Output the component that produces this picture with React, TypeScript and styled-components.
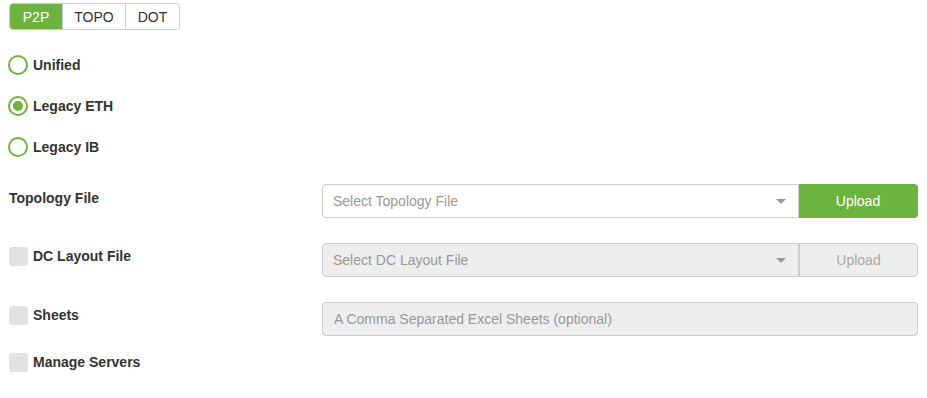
import * as React from 'react';
import styled, { createGlobalStyle } from 'styled-components';

const GREEN = '#6db33f';

const GlobalStyle = createGlobalStyle`
  body {
    margin: 0;
    background: #fff;
    font-family: "Liberation Sans", Arial, Helvetica, sans-serif;
    color: #333;
  }
`

const Page = styled.div`
  padding: 3px 9px 0 8px;
  display: flex;
  flex-direction: column;
`

const TabGroup = styled.div`
  display: inline-flex;
  align-self: flex-start;
  margin-left: 1px;
  height: 27px;
  border: 1px solid #ccc;
  border-radius: 4px;
  overflow: hidden;
  box-sizing: border-box;
`

const Tab = styled.button<{ active?: boolean; w: number }>`
  width: ${p => p.w}px;
  border: none;
  border-left: ${p => (p.active ? 'none' : '1px solid #ccc')};
  &:first-child { border-left: none; }
  background: ${p => (p.active ? GREEN : '#fff')};
  color: ${p => (p.active ? '#fff' : '#333')};
  font-family: inherit;
  font-size: 14px;
  padding: 0;
  cursor: pointer;
`

const RadioList = styled.div`
  display: flex;
  flex-direction: column;
  gap: 21px;
  margin-top: 25px;
`

const RadioRow = styled.label`
  display: flex;
  align-items: center;
  gap: 5px;
  height: 20px;
  font-size: 14px;
  font-weight: bold;
  color: #333;
`

const RadioCircle = styled.span<{ checked?: boolean }>`
  width: 20px;
  height: 20px;
  box-sizing: border-box;
  border: 2px solid ${GREEN};
  border-radius: 50%;
  display: flex;
  align-items: center;
  justify-content: center;
  &::after {
    content: '';
    width: 10px;
    height: 10px;
    border-radius: 50%;
    background: ${p => (p.checked ? GREEN : 'transparent')};
  }
`

const FieldRow = styled.div<{ top: number }>`
  display: flex;
  align-items: flex-start;
  margin-top: ${p => p.top}px;
`

const LabelCell = styled.div<{ pad: number }>`
  width: 314px;
  box-sizing: border-box;
  flex-shrink: 0;
  display: flex;
  align-items: center;
  gap: 5px;
  padding-top: ${p => p.pad}px;
  padding-left: 1px;
  font-size: 14px;
  font-weight: bold;
  line-height: 19px;
  color: #333;
`

const Check = styled.span`
  width: 19px;
  height: 19px;
  border-radius: 3px;
  background: #e2e2e2;
  flex-shrink: 0;
`

const Control = styled.div`
  flex: 1;
  display: flex;
  height: 34px;
`

const SelectBox = styled.div<{ disabled?: boolean }>`
  flex: 1;
  display: flex;
  align-items: center;
  justify-content: space-between;
  box-sizing: border-box;
  border: 1px solid #ccc;
  border-radius: 4px 0 0 4px;
  background: ${p => (p.disabled ? '#eee' : '#fff')};
  padding: 0 12px 0 10px;
  font-size: 14px;
  color: #999;
`

const Caret = styled.span`
  width: 0;
  height: 0;
  border-left: 5px solid transparent;
  border-right: 5px solid transparent;
  border-top: 5px solid #999;
`

const UploadButton = styled.button<{ disabled?: boolean }>`
  width: 119px;
  box-sizing: border-box;
  border: 1px solid ${p => (p.disabled ? '#ccc' : GREEN)};
  border-left: ${p => (p.disabled ? '1px solid #ccc' : 'none')};
  border-radius: 0 4px 4px 0;
  background: ${p => (p.disabled ? '#eee' : GREEN)};
  color: ${p => (p.disabled ? '#aaa' : '#fff')};
  font-family: inherit;
  font-size: 14px;
  padding: 0;
`

const TextInput = styled.div`
  flex: 1;
  display: flex;
  align-items: center;
  box-sizing: border-box;
  border: 1px solid #ccc;
  border-radius: 4px;
  background: #eee;
  padding: 0 11px;
  font-size: 14px;
  color: #999;
`

const radios = [
  { label: 'Unified', checked: false },
  { label: 'Legacy ETH', checked: true },
  { label: 'Legacy IB', checked: false },
]

export default function App() {
  return (
    <Page>
      <GlobalStyle />
      <TabGroup>
        <Tab active w={52}>P2P</Tab>
        <Tab w={63}>TOPO</Tab>
        <Tab w={54}>DOT</Tab>
      </TabGroup>

      <RadioList>
        {radios.map(r => (
          <RadioRow key={r.label}>
            <RadioCircle checked={r.checked} />
            {r.label}
          </RadioRow>
        ))}
      </RadioList>

      <FieldRow top={27}>
        <LabelCell pad={5}>Topology File</LabelCell>
        <Control>
          <SelectBox>
            Select Topology File
            <Caret />
          </SelectBox>
          <UploadButton>Upload</UploadButton>
        </Control>
      </FieldRow>

      <FieldRow top={25}>
        <LabelCell pad={4}>
          <Check />
          DC Layout File
        </LabelCell>
        <Control>
          <SelectBox disabled>
            Select DC Layout File
            <Caret />
          </SelectBox>
          <UploadButton disabled>Upload</UploadButton>
        </Control>
      </FieldRow>

      <FieldRow top={25}>
        <LabelCell pad={4}>
          <Check />
          Sheets
        </LabelCell>
        <Control>
          <TextInput>A Comma Separated Excel Sheets (optional)</TextInput>
        </Control>
      </FieldRow>

      <FieldRow top={17}>
        <LabelCell pad={0}>
          <Check />
          Manage Servers
        </LabelCell>
      </FieldRow>
    </Page>
  )
}
